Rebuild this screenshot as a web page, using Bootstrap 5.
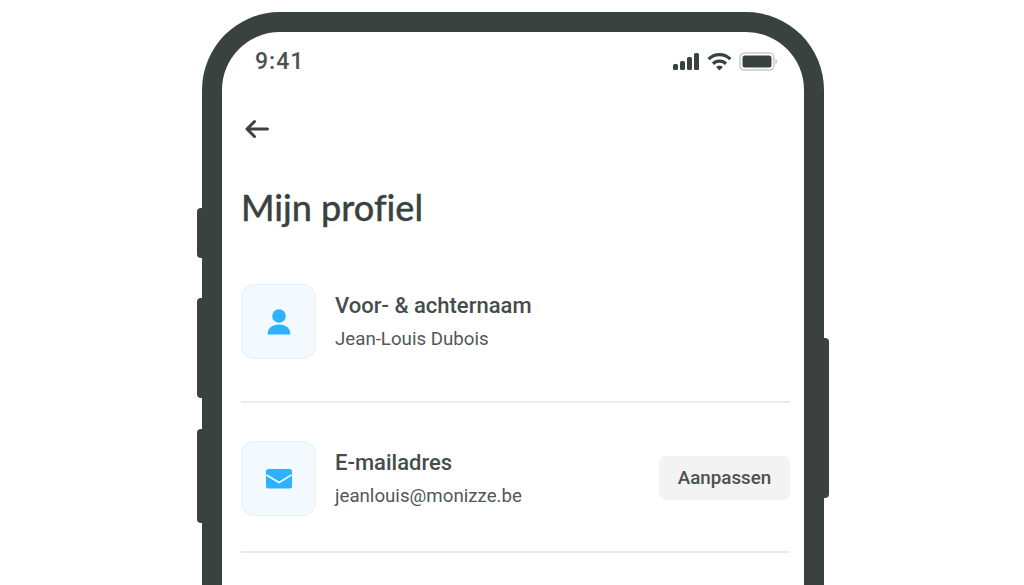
<!DOCTYPE html>
<html lang="nl">
<head>
  <meta charset="UTF-8" />
  <title>Mijn profiel</title>
  <link href="https://cdn.jsdelivr.net/npm/bootstrap@5.3.3/dist/css/bootstrap.min.css" rel="stylesheet" />
  <style>
    html, body { height: 585px; overflow: hidden; background: #fff; }
    body { font-family: Roboto, sans-serif; color: #3a4240; }
    .phone-frame {
      position: relative;
      width: 622px;
      height: 573px;
      margin: 12px 0 0 202px;
      border: 20px solid #3a4240;
      border-bottom: 0;
      border-radius: 78px 78px 0 0;
      background: #fff;
    }
    .side-btn { position: absolute; width: 6px; background: #3a4240; }
    .side-left { left: -25px; border-radius: 4px 0 0 4px; }
    .side-right { right: -25px; border-radius: 0 4px 4px 0; }
    .btn-a { top: 176px; height: 50px; }
    .btn-b { top: 266px; height: 100px; }
    .btn-c { top: 397px; height: 94px; }
    .btn-d { top: 306px; height: 160px; }
    .status-row { padding: 16px 26px 0 33px; height: 61px; }
    .status-icons { gap: 7px; }
    .clock { font-size: 23px; font-weight: 500; letter-spacing: 1px; line-height: 28px; color: #4a5250; }
    .back-row { padding-left: 22px; height: 36px; margin-top: 18px; }
    .page-title { font-family: Lato, sans-serif; font-size: 36px; font-weight: 500; line-height: 44px; margin: 38px 0 0 19px; color: #3a4240; -webkit-text-stroke: .3px #3a4240; font-variant-ligatures: none; }
    .profile-list { margin: 55px 14px 0 19px; }
    .profile-row { height: 119px; border-bottom: 2px solid #ebebeb; }
    .profile-row + .profile-row { margin-top: 38px; height: 112px; }
    .icon-tile {
      width: 75px; height: 75px; flex: none;
      background: #f2f9ff; border: 1px solid #e2f1fd; border-radius: 13px;
    }
    .row-text { margin-left: 19px; padding-top: 9px; }
    .row-label { font-size: 22px; font-weight: 500; line-height: 26px; margin-bottom: 8px; color: #454d4c; }
    .row-value { font-size: 18.7px; line-height: 24px; color: #50585a; }
    .edit-btn {
      width: 131px; height: 44px; padding: 0; margin-top: 15px;
      background: #f3f3f3; border: 0; border-radius: 7px;
      font-size: 18.8px; font-weight: 500; color: #4a5250;
    }
  </style>
</head>
<body>
  <div class="phone-frame">
    <span class="side-btn side-left btn-a"></span>
    <span class="side-btn side-left btn-b"></span>
    <span class="side-btn side-left btn-c"></span>
    <span class="side-btn side-right btn-d"></span>

    <div class="status-row d-flex justify-content-between align-items-start">
      <span class="clock">9:41</span>
      <div class="status-icons d-flex align-items-center pt-1">
        <svg width="27" height="18" viewBox="0 0 27 18" fill="#3a4240">
          <rect x="0" y="11" width="5" height="6" rx="1.5"/>
          <rect x="7" y="8" width="5" height="9" rx="1.5"/>
          <rect x="14" y="4" width="5" height="13" rx="1.5"/>
          <rect x="21" y="0" width="5" height="17" rx="1.5"/>
        </svg>
        <svg width="25" height="18" viewBox="0 0 25 18" fill="#3a4240">
          <path d="M12.5 0C7.8 0 3.6 1.9.5 5l2.3 2.3C5.3 4.8 8.7 3.3 12.5 3.3s7.2 1.5 9.7 4L24.5 5C21.4 1.9 17.2 0 12.5 0z"/>
          <path d="M12.5 6.5c-3 0-5.7 1.2-7.6 3.1l2.3 2.300c1.400-1.300 3.200-2.100 5.300-2.100s3.900.8 5.300 2.100l2.300-2.300c-1.900-1.900-4.600-3.100-7.600-3.100z"/>
          <path d="M12.5 12.7c-1.300 0-2.500.5-3.400 1.300l3.400 3.600 3.400-3.600c-.9-.8-2.100-1.300-3.400-1.300z"/>
        </svg>
        <svg width="39" height="19" viewBox="0 0 39 19">
          <rect x="1" y="1" width="34" height="17" rx="4.5" fill="none" stroke="#c9cccc" stroke-width="1.5"/>
          <rect x="3.5" y="3.5" width="29" height="12" rx="2.5" fill="#3a4240"/>
          <path d="M36.5 7v5c1-.3 1.700-1.300 1.700-2.500S37.500 7.300 36.500 7z" fill="#c9cccc"/>
        </svg>
      </div>
    </div>

    <div class="back-row d-flex align-items-center">
      <svg width="26" height="20" viewBox="0 0 26 20" fill="none" stroke="#3a4240" stroke-width="3" stroke-linecap="round" stroke-linejoin="round">
        <path d="M23.5 10H3M10.5 2.5 3 10l7.500 7.500"/>
      </svg>
    </div>

    <h1 class="page-title">Mijn profiel</h1>

    <div class="profile-list">
      <div class="profile-row d-flex align-items-start">
        <div class="icon-tile d-flex align-items-center justify-content-center">
          <svg width="24" height="26" viewBox="0 0 24 26" fill="#2db2ff">
            <circle cx="12" cy="7" r="6.8"/>
            <path d="M.7 24.5C.7 19 5.500 15.500 12 15.500S23.300 19 23.300 24.500c0 .6-.4 1-1 1H1.700c-.6 0-1-.4-1-1z"/>
          </svg>
        </div>
        <div class="row-text">
          <div class="row-label">Voor- &amp; achternaam</div>
          <div class="row-value">Jean-Louis Dubois</div>
        </div>
      </div>
      <div class="profile-row d-flex align-items-start">
        <div class="icon-tile d-flex align-items-center justify-content-center">
          <svg width="26" height="20" viewBox="0 0 26 20">
            <rect width="26" height="19.5" rx="2.5" fill="#2db2ff"/>
            <path d="M.5 6 13 13.500 25.500 6" fill="none" stroke="#f2f9ff" stroke-width="1.600"/>
          </svg>
        </div>
        <div class="row-text">
          <div class="row-label">E-mailadres</div>
          <div class="row-value">jeanlouis@monizze.be</div>
        </div>
        <button class="edit-btn btn ms-auto" type="button">Aanpassen</button>
      </div>
    </div>
  </div>

  <script src="https://cdn.jsdelivr.net/npm/bootstrap@5.3.3/dist/js/bootstrap.bundle.min.js"></script>
</body>
</html>
